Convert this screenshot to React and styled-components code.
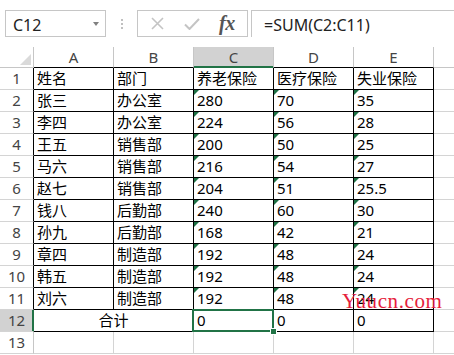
import React from "react";
import styled, { createGlobalStyle, css } from "styled-components";

const GREEN = "#217346";
const GRID = "#d4d4d4";
const HEAD_LINE = "#c6c6c6";

const columns = ["A", "B", "C", "D", "E"];

const rows = [
    ["姓名", "部门", "养老保险", "医疗保险", "失业保险"],
    ["张三", "办公室", "280", "70", "35"],
    ["李四", "办公室", "224", "56", "28"],
    ["王五", "销售部", "200", "50", "25"],
    ["马六", "销售部", "216", "54", "27"],
    ["赵七", "销售部", "204", "51", "25.5"],
    ["钱八", "后勤部", "240", "60", "30"],
    ["孙九", "后勤部", "168", "42", "21"],
    ["章四", "制造部", "192", "48", "24"],
    ["韩五", "制造部", "192", "48", "24"],
    ["刘六", "制造部", "192", "48", "24"],
];

const App = () => {
    return (
        <>
            <GlobalStyle />
            <Page>
                <FormulaBar>
                    <NameBox>
                        <span>C12</span>
                        <DropArrow />
                    </NameBox>
                    <Grip>
                        <Dot />
                        <Dot />
                        <Dot />
                    </Grip>
                    <FxBox>
                        <svg width="13" height="13" viewBox="0 0 13 13">
                            <path d="M1 1 L12 12 M12 1 L1 12" stroke="#c4c4c4" strokeWidth="1.6" fill="none" />
                        </svg>
                        <svg width="16" height="12" viewBox="0 0 16 12">
                            <path d="M1 6.5 L5.5 11 L15 1" stroke="#c4c4c4" strokeWidth="2" fill="none" />
                        </svg>
                        <FxText>fx</FxText>
                    </FxBox>
                    <FormulaInput>=SUM(C2:C11)</FormulaInput>
                </FormulaBar>

                <Sheet>
                    <Corner>
                        <CornerMark />
                    </Corner>
                    {columns.map(col => (
                        <ColHead key={col} $active={col === "C"}>{col}</ColHead>
                    ))}
                    <ColHead $extra />

                    {rows.map((row, r) => (
                        <React.Fragment key={r}>
                            <RowHead $edge>{r + 1}</RowHead>
                            {row.map((value, c) => (
                                <Cell key={c} $table $flag={r > 0 && c >= 2}>{value}</Cell>
                            ))}
                            <Cell $extra />
                        </React.Fragment>
                    ))}

                    <RowHead $edge $active>12</RowHead>
                    <Cell $table $span={2} $center>合计</Cell>
                    <Cell $table>
                        0
                        <Selection />
                        <FillHandle />
                    </Cell>
                    <Cell $table>0</Cell>
                    <Cell $table>0</Cell>
                    <Cell $extra />

                    <RowHead>13</RowHead>
                    {columns.map(col => (
                        <Cell key={col} />
                    ))}
                    <Cell $extra />

                    <Watermark>Yuucn.com</Watermark>
                </Sheet>
            </Page>
        </>
    );
};

export default App;

const GlobalStyle = createGlobalStyle`
  html, body {
    margin: 0;
    padding: 0;
    background: #fff;
  }
  body {
    font-family: "Noto Sans", "Noto Sans CJK SC", sans-serif;
    color: #000;
  }
`;

const Page = styled.div`
  width: 454px;
  height: 355px;
  overflow: hidden;
  background: #fff;
`;

const FormulaBar = styled.div`
  display: flex;
  align-items: stretch;
  height: 27px;
  padding: 10px 0 0 5px;
  margin-bottom: 10px;
`;

const NameBox = styled.div`
  box-sizing: border-box;
  width: 101px;
  border: 1px solid #c6c6c6;
  display: flex;
  align-items: center;
  justify-content: space-between;
  padding: 2px 6px 0 7px;
  font-size: 16px;
  color: #222;
`;

const DropArrow = styled.span`
  width: 0;
  height: 0;
  border-left: 3px solid transparent;
  border-right: 3px solid transparent;
  border-top: 4px solid #808080;
  margin-top: -2px;
`;

const Grip = styled.div`
  width: 31px;
  display: flex;
  flex-direction: column;
  align-items: center;
  justify-content: center;
  gap: 2px;
`;

const Dot = styled.span`
  width: 2px;
  height: 2px;
  background: #c0c0c0;
`;

const FxBox = styled.div`
  box-sizing: border-box;
  width: 111px;
  border: 1px solid #c6c6c6;
  display: flex;
  align-items: center;
  padding: 0 0 0 13px;
  gap: 20px;
`;

const FxText = styled.span`
  font-family: "Liberation Serif", serif;
  font-style: italic;
  font-weight: bold;
  font-size: 20px;
  color: #555;
  margin-left: -1px;
  letter-spacing: -0.5px;
`;

const FormulaInput = styled.div`
  flex: 1;
  margin-left: 3px;
  border-top: 1px solid #c6c6c6;
  border-left: 1px solid #c6c6c6;
  display: flex;
  align-items: center;
  padding: 2px 0 0 12px;
  font-size: 16px;
  color: #222;
`;

const Sheet = styled.div`
  position: relative;
  display: grid;
  grid-template-columns: 34px repeat(5, 80px) 1fr;
  grid-template-rows: 21px;
  grid-auto-rows: 22px;
`;

const baseCell = css`
  box-sizing: border-box;
  border-right: 1px solid ${GRID};
  border-bottom: 1px solid ${GRID};
  font-size: 15px;
  line-height: 21px;
  white-space: nowrap;
  overflow: visible;
`;

const Corner = styled.div`
  ${baseCell};
  border-right-color: ${HEAD_LINE};
  border-bottom-color: ${HEAD_LINE};
  position: relative;
`;

const CornerMark = styled.span`
  position: absolute;
  right: 2px;
  bottom: 2px;
  width: 0;
  height: 0;
  border-left: 11px solid transparent;
  border-bottom: 11px solid #dadada;
`;

const ColHead = styled.div`
  ${baseCell};
  text-align: center;
  color: #444;
  line-height: 20px;
  border-right-color: ${HEAD_LINE};
  border-bottom-color: #000;
  background: ${p => (p.$active ? "#d2d2d2" : "#fff")};
  ${p => p.$active && css`
    border-bottom-color: ${GREEN};
    box-shadow: inset 0 -1px 0 ${GREEN};
  `}
  ${p => p.$extra && css`
    border-right: none;
    border-bottom-color: ${HEAD_LINE};
  `}
`;

const RowHead = styled.div`
  ${baseCell};
  text-align: center;
  color: #444;
  border-right-color: ${p => (p.$active ? GREEN : p.$edge ? "#000" : HEAD_LINE)};
  background: ${p => (p.$active ? "#d2d2d2" : "#fff")};
  ${p => p.$active && css`
    box-shadow: inset -1px 0 0 ${GREEN};
  `}
`;

const Cell = styled.div`
  ${baseCell};
  position: relative;
  padding-left: 3px;
  ${p => p.$table && css`
    border-right-color: #000;
    border-bottom-color: #000;
  `}
  ${p => p.$extra && css`
    border-right: none;
  `}
  ${p => p.$span && css`
    grid-column: span ${p.$span};
  `}
  ${p => p.$center && css`
    text-align: center;
    padding-left: 0;
  `}
  ${p => p.$flag && css`
    &::before {
      content: "";
      position: absolute;
      top: 0;
      left: 0;
      border-top: 5px solid #1e7145;
      border-right: 5px solid transparent;
    }
  `}
`;

const Selection = styled.span`
  position: absolute;
  top: -1px;
  left: -2px;
  right: -1px;
  bottom: -1px;
  border: 2px solid ${GREEN};
  pointer-events: none;
`;

const FillHandle = styled.span`
  position: absolute;
  right: -4px;
  bottom: -4px;
  width: 5px;
  height: 5px;
  background: ${GREEN};
  border: 1px solid #fff;
  z-index: 2;
`;

const Watermark = styled.div`
  position: absolute;
  left: 342px;
  top: 244px;
  font-family: "Liberation Serif", serif;
  font-size: 21px;
  line-height: 1;
  letter-spacing: 0.6px;
  color: #e61e3c;
  pointer-events: none;
`;
